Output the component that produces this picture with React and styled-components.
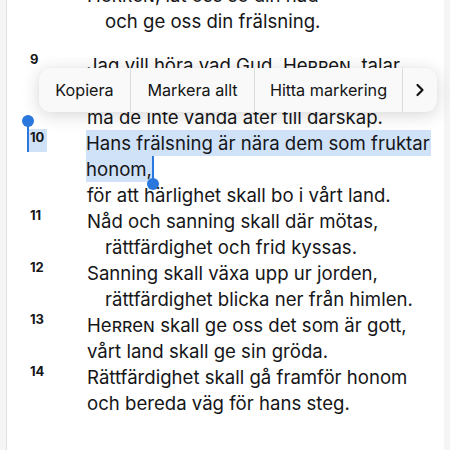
import React from "react";
import styled, { createGlobalStyle } from "styled-components";

const Global = createGlobalStyle`
  html, body { margin: 0; padding: 0; background: #f5f5f5; }
  body { font-family: Inter, "Noto Sans", sans-serif; color: #161618; }
  #root { height: 450px; overflow: hidden; }
`;

const Page = styled.div`
  position: relative;
  height: 450px;
  overflow: hidden;
`;

const Card = styled.main`
  margin-left: 6px;
  width: 438px;
  height: 450px;
  background: #ffffff;
  border-left: 1px solid #e1e1e1;
  box-sizing: border-box;
  overflow: hidden;
`;

const Content = styled.div`
  margin-top: -18px;
  display: flex;
  flex-direction: column;
`;

const Stanza = styled.section`
  display: flex;
  flex-direction: column;
  & + & { margin-top: 18px; }
`;

const Verse = styled.div`
  display: grid;
  grid-template-columns: 80px 1fr;
  align-items: start;
`;

const Num = styled.div`
  justify-self: start;
  position: relative;
  margin-left: ${p => (p.$selected ? "20px" : "23px")};
  margin-top: ${p => (p.$selected ? "-1px" : "0")};
  padding: ${p => (p.$selected ? "1px 3px 8px 3px" : "0")};
  font-size: 13px;
  line-height: 14px;
  font-weight: 700;
  background: ${p => (p.$selected ? "#cfe2f8" : "transparent")};
`;

const Lines = styled.div`
  display: flex;
  flex-direction: column;
`;

const Line = styled.div`
  position: relative;
  width: fit-content;
  font-size: 18.6px;
  line-height: 26px;
  height: 26px;
  white-space: nowrap;
  padding-left: ${p => (p.$indent ? "18px" : "0")};
  margin-left: ${p => (p.$selected ? "-1px" : "0")};
  padding-right: ${p => (p.$selected ? "1px" : "0")};
  background: ${p => (p.$selected ? "#cfe2f8" : "transparent")};
`;

const Sc = styled.span`
  font-variant: small-caps;
`;

const StartHandle = styled.span`
  position: absolute;
  left: 0;
  top: -8px;
  width: 2px;
  height: 31px;
  background: #2a78dd;
  &::before {
    content: "";
    position: absolute;
    left: -5px;
    top: -6px;
    width: 12px;
    height: 12px;
    border-radius: 50%;
    background: #2a78dd;
  }
`;

const EndHandle = styled.span`
  position: absolute;
  right: -1px;
  top: 0;
  width: 2px;
  height: 26px;
  background: #2a78dd;
  &::after {
    content: "";
    position: absolute;
    left: -5px;
    top: 22px;
    width: 12px;
    height: 12px;
    border-radius: 50%;
    background: #2a78dd;
  }
`;

const Menu = styled.nav`
  position: absolute;
  left: 39px;
  top: 68px;
  width: 398px;
  height: 44px;
  display: flex;
  align-items: stretch;
  background: #f9f9f9;
  border-radius: 11px;
  box-shadow: 0 3px 18px rgba(0, 0, 0, 0.16), 0 0 1px rgba(0, 0, 0, 0.08);
  overflow: hidden;
`;

const MenuItem = styled.button`
  all: unset;
  display: flex;
  align-items: center;
  justify-content: center;
  flex: ${p => (p.$grow ? "1 1 auto" : "0 0 auto")};
  width: ${p => (p.$w ? `${p.$w}px` : "auto")};
  box-sizing: border-box;
  white-space: nowrap;
  font-family: Inter, "Noto Sans", sans-serif;
  font-size: 16.2px;
  color: #141414;
  & + & { border-left: 1px solid #dcdcdc; }
`;

const Herren = () => <Sc>Herren</Sc>;

export default function App() {
  return (
    <Page>
      <Global />
      <Card>
        <Content>
          <Stanza>
            <Verse>
              <div />
              <Lines>
                <Line><Herren />, låt oss se din nåd</Line>
                <Line $indent>och ge oss din frälsning.</Line>
              </Lines>
            </Verse>
          </Stanza>
          <Stanza>
            <Verse>
              <Num>9</Num>
              <Lines>
                <Line>Jag vill höra vad Gud, <Herren />, talar.</Line>
                <Line $indent>Han lovar frid åt sitt folk,</Line>
                <Line>må de inte vända åter till dårskap.</Line>
              </Lines>
            </Verse>
            <Verse>
              <Num $selected>10<StartHandle /></Num>
              <Lines>
                <Line $selected>Hans frälsning är nära dem som fruktar</Line>
                <Line $selected>honom,<EndHandle /></Line>
                <Line>för att härlighet skall bo i vårt land.</Line>
              </Lines>
            </Verse>
            <Verse>
              <Num>11</Num>
              <Lines>
                <Line>Nåd och sanning skall där mötas,</Line>
                <Line $indent>rättfärdighet och frid kyssas.</Line>
              </Lines>
            </Verse>
            <Verse>
              <Num>12</Num>
              <Lines>
                <Line>Sanning skall växa upp ur jorden,</Line>
                <Line $indent>rättfärdighet blicka ner från himlen.</Line>
              </Lines>
            </Verse>
            <Verse>
              <Num>13</Num>
              <Lines>
                <Line><Herren /> skall ge oss det som är gott,</Line>
                <Line>vårt land skall ge sin gröda.</Line>
              </Lines>
            </Verse>
            <Verse>
              <Num>14</Num>
              <Lines>
                <Line>Rättfärdighet skall gå framför honom</Line>
                <Line>och bereda väg för hans steg.</Line>
              </Lines>
            </Verse>
          </Stanza>
        </Content>
      </Card>
      <Menu>
        <MenuItem $w={91}>Kopiera</MenuItem>
        <MenuItem $w={124}>Markera allt</MenuItem>
        <MenuItem $w={148}>Hitta markering</MenuItem>
        <MenuItem $grow aria-label="Mer">
          <svg width="10" height="14" viewBox="0 0 10 14">
            <path d="M2.5 2 L7.5 7 L2.5 12" fill="none" stroke="#141414" strokeWidth="2.2" strokeLinecap="round" strokeLinejoin="round" />
          </svg>
        </MenuItem>
      </Menu>
    </Page>
  );
}
